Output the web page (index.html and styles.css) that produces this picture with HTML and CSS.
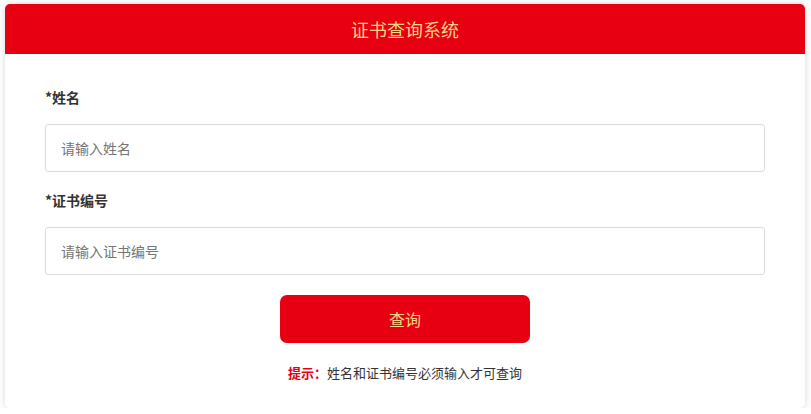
FILE: index.html
```html
<!DOCTYPE html>
<html lang="zh-CN">
<head>
<meta charset="utf-8">
<title>证书查询系统</title>
<link rel="stylesheet" href="styles.css">
</head>
<body>
<div class="card">
  <div class="card-header">证书查询系统</div>
  <form class="card-body">
    <label class="field-label">*姓名</label>
    <input class="field-input" type="text" placeholder="请输入姓名">
    <label class="field-label">*证书编号</label>
    <input class="field-input" type="text" placeholder="请输入证书编号">
    <div class="actions">
      <button type="button" class="btn-query">查询</button>
    </div>
    <p class="tip"><span class="tip-key">提示：</span>姓名和证书编号必须输入才可查询</p>
  </form>
</div>
</body>
</html>
```
FILE: styles.css
```css
* { box-sizing: border-box; }
html, body { margin: 0; padding: 0; }
body {
  background: #ffffff;
  font-family: "Noto Sans CJK SC", "Noto Sans", "Liberation Sans", sans-serif;
  color: #333;
  padding: 4px 6px 0 5px;
}
.card {
  background: #fff;
  border-radius: 5px;
  box-shadow: 0 0 7px rgba(0, 0, 0, 0.16);
  overflow: hidden;
}
.card-header {
  background: #e60012;
  color: #f6d584;
  height: 50px;
  line-height: 50px;
  text-align: center;
  font-size: 18px;
}
.card-body {
  display: flex;
  flex-direction: column;
  padding: 33px 40px 25px;
  margin: 0;
}
.field-label {
  font-size: 14px;
  font-weight: bold;
  line-height: 20px;
  color: #333;
  margin-bottom: 17px;
}
.field-input {
  height: 48px;
  border: 1px solid #dcdcdc;
  border-radius: 3px;
  padding: 0 15px;
  font-size: 14px;
  font-family: inherit;
  color: #333;
  margin-bottom: 18px;
  outline: none;
}
.field-input::placeholder { color: #757575; }
.actions {
  display: flex;
  justify-content: center;
  margin-top: 2px;
}
.btn-query {
  width: 250px;
  height: 48px;
  border: none;
  border-radius: 7px;
  background: #e60012;
  color: #f6d584;
  font-size: 16px;
  font-family: inherit;
}
.tip {
  margin: 20px 0 0;
  text-align: center;
  font-size: 13px;
  line-height: 20px;
  color: #333;
}
.tip-key { color: #e60012; font-weight: bold; }
```
